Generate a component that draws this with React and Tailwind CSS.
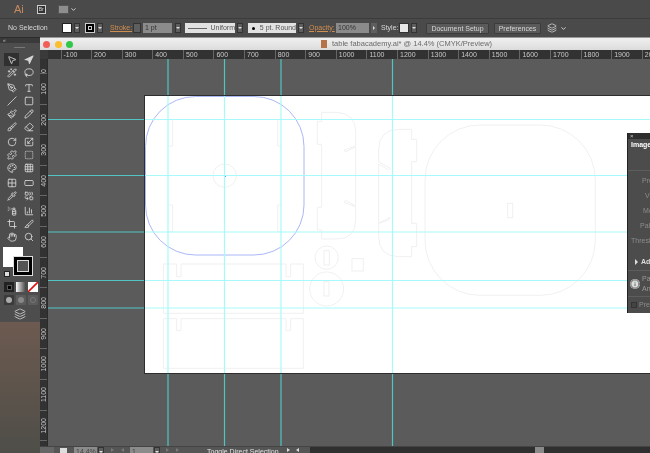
import React from 'react';
import {
  MousePointer2, Navigation, Wand2, Lasso, PenTool, Type, Slash, Square, Paintbrush, Pencil,
  Brush, Eraser, RotateCw, Scaling, Puzzle, BoxSelect, Palette, Grid3x3, Grid2x2, RectangleHorizontal,
  Pipette, Combine, SprayCan, BarChart3, Crop, Slice, Hand, Search, ChevronDown, Info, Layers,
} from 'lucide-react';

const TOOL_GROUPS = [
  [[MousePointer2, Navigation], [Wand2, Lasso]],
  [[PenTool, Type], [Slash, Square], [Paintbrush, Pencil], [Brush, Eraser]],
  [[RotateCw, Scaling], [Puzzle, BoxSelect], [Palette, Grid3x3]],
  [[Grid2x2, RectangleHorizontal], [Pipette, Combine]],
  [[SprayCan, BarChart3], [Crop, Slice], [Hand, Search]],
];

const TOP_RULER = ['-100', '200', '300', '400', '500', '600', '700', '800', '900', '1000', '1100', '1200', '1300', '1400', '1500', '1600', '1700', '1800', '1900', '2000'];
const SIDE_RULER = ['100', '200', '300', '400', '500', '600', '700', '800', '900', '1000', '1100', '1200'];

function Caret({ className = 'ml-[2px]' }) {
  return (
    <div className={`w-[6px] h-[10px] bg-[#5e5e5e] border border-[#333] flex items-center justify-center ${className}`}>
      <div className="w-0 h-0 border-x-[2px] border-x-transparent border-t-[2px] border-t-[#ddd]" />
    </div>
  );
}

function NavArrow({ className }) {
  return <div className={`w-0 h-0 mt-[1px] border-y-[2px] border-y-transparent border-l-[3px] border-l-[#777] ${className}`} />;
}

function ToolRow({ left: Left, right: Right, active }) {
  return (
    <div className="h-[13px] flex items-center">
      <div className={`w-[15px] h-[13px] ml-[4px] flex items-center justify-center ${active ? 'bg-[#303030]' : ''}`}>
        <Left size={10} strokeWidth={2} className="text-[#d8d8d8]" />
      </div>
      <div className="w-[15px] h-[13px] ml-[2px] flex items-center justify-center">
        <Right size={10} strokeWidth={2} className="text-[#d8d8d8]" fill={active ? '#d8d8d8' : 'none'} />
      </div>
    </div>
  );
}

function Toolbar() {
  return (
    <div className="h-[285px] bg-[#4d4d4d] flex flex-col border-t border-[#2c2c2c]">
      <div className="h-[5px] bg-[#3a3a3a] text-[5px] leading-[5px] text-[#bbb] pl-[3px]">«</div>
      <div className="h-[1px] w-[11px] bg-[#777] ml-[14px] mt-[4px] mb-[5px]" />
      {TOOL_GROUPS.map((group, i) => (
        <div key={i} className="mb-[2px]">
          {group.map(([left, right], j) => (
            <ToolRow key={j} left={left} right={right} active={i === 0 && j === 0} />
          ))}
        </div>
      ))}
      <div className="relative h-[32px] mt-[1px]">
        <div className="absolute left-[3px] top-[1px] w-[20px] h-[20px] bg-white" />
        <div className="absolute left-[13px] top-[10px] w-[20px] h-[20px] bg-black border border-[#ddd] flex items-center justify-center">
          <div className="w-[12px] h-[12px] border border-[#ddd] bg-[#555]" />
        </div>
        <div className="absolute left-[4px] top-[25px] w-[6px] h-[6px] bg-[#ddd] border border-[#222]" />
      </div>
      <div className="flex mt-[4px] ml-[4px] gap-[2px]">
        <div className="w-[10px] h-[10px] bg-[#222] flex items-center justify-center">
          <div className="w-[5px] h-[5px] bg-black border border-[#555]" />
        </div>
        <div className="w-[10px] h-[10px] bg-gradient-to-r from-white to-[#444]" />
        <div className="w-[10px] h-[10px] bg-white">
          <svg viewBox="0 0 10 10" className="w-full h-full">
            <line x1="0" y1="10" x2="10" y2="0" stroke="#e01010" strokeWidth="1.6" />
          </svg>
        </div>
      </div>
      <div className="flex mt-[3px] ml-[4px] gap-[2px]">
        <div className="w-[10px] h-[10px] bg-[#3a3a3a] rounded-[1px] flex items-center justify-center">
          <div className="w-[6px] h-[6px] rounded-full bg-[#aaa]" />
        </div>
        <div className="w-[10px] h-[10px] bg-[#5c5c5c] rounded-[1px] flex items-center justify-center">
          <div className="w-[6px] h-[6px] rounded-full bg-[#888]" />
        </div>
        <div className="w-[10px] h-[10px] bg-[#5c5c5c] rounded-[1px] flex items-center justify-center">
          <div className="w-[6px] h-[6px] rounded-full border border-[#777]" />
        </div>
      </div>
      <div className="flex justify-center mt-[3px]">
        <Layers size={12} className="text-[#bbb]" />
      </div>
    </div>
  );
}

function ControlBar() {
  return (
    <div className="h-[19px] bg-[#4a4a4a] flex items-center text-[7px] text-[#d8d8d8] border-t border-[#3c3c3c]">
      <span className="ml-[8px] w-[54px] text-[#d8d8d8]">No Selection</span>
      <div className="w-[10px] h-[10px] bg-white border border-[#222]" />
      <Caret />
      <div className="ml-[5px] w-[10px] h-[10px] bg-black border border-[#ccc] flex items-center justify-center">
        <div className="w-[4px] h-[4px] border border-[#ccc]" />
      </div>
      <Caret />
      <span className="ml-[7px] w-[23px] text-[#d08e50] underline">Stroke:</span>
      <div className="w-[8px] h-[10px] bg-[#5e5e5e] border border-[#333]" />
      <div className="ml-[2px] w-[29px] h-[10px] bg-[#8b8b8b] text-[#333] leading-[10px] pl-[2px]">1 pt</div>
      <Caret className="ml-[3px]" />
      <div className="ml-[4px] w-[50px] h-[10px] bg-[#e2e2e2] text-[#555] leading-[10px] flex items-center">
        <div className="ml-[3px] w-[20px] h-[1px] bg-[#666]" />
        <span className="ml-[3px]">Uniform</span>
      </div>
      <Caret />
      <div className="ml-[5px] w-[48px] h-[10px] bg-[#e2e2e2] text-[#555] leading-[10px] flex items-center">
        <div className="ml-[4px] w-[3px] h-[3px] rounded-full bg-black" />
        <span className="ml-[5px] whitespace-nowrap">5 pt. Round</span>
      </div>
      <Caret />
      <span className="ml-[5px] w-[27px] text-[#d08e50] underline">Opacity:</span>
      <div className="w-[33px] h-[10px] bg-[#8b8b8b] text-[#333] leading-[10px] pl-[2px]">100%</div>
      <div className="ml-[2px] w-[6px] h-[10px] bg-[#5e5e5e] flex items-center justify-center">
        <div className="w-0 h-0 border-y-[2px] border-y-transparent border-l-[2px] border-l-[#ddd]" />
      </div>
      <span className="ml-[4px] w-[18px]">Style:</span>
      <div className="w-[10px] h-[10px] bg-[#e8e8e8] border border-[#333]" />
      <Caret />
      <div className="ml-[9px] w-[63px] h-[11px] bg-[#5a5a5a] border border-[#3c3c3c] rounded-[1px] text-center leading-[9px]">Document Setup</div>
      <div className="ml-[5px] w-[47px] h-[11px] bg-[#5a5a5a] border border-[#3c3c3c] rounded-[1px] text-center leading-[9px]">Preferences</div>
      <Layers size={10} className="ml-[6px] text-[#ccc]" />
      <ChevronDown size={7} strokeWidth={3} className="ml-[3px] text-[#ddd]" />
    </div>
  );
}

function DocTitle() {
  return (
    <div className="h-[13px] bg-gradient-to-b from-[#f0f0f0] to-[#dcdcdc] flex items-center border-t border-[#999]">
      <div className="ml-[3px] w-[7px] h-[7px] rounded-full bg-[#f25f58]" />
      <div className="ml-[5px] w-[7px] h-[7px] rounded-full bg-[#fbbe2e]" />
      <div className="ml-[4px] w-[7px] h-[7px] rounded-full bg-[#31c748]" />
      <div className="ml-[248px] w-[6px] h-[8px] bg-[#b5734a]" />
      <span className="ml-[5px] text-[7.5px] text-[#6a6a6a] whitespace-nowrap">
        table fabacademy.ai* @ 14.4% (CMYK/Preview)
      </span>
    </div>
  );
}

function TopRuler() {
  return (
    <div className="h-[9px] bg-[#323232] flex overflow-hidden text-[7px] leading-[9px] text-[#c8c8c8]">
      <div className="w-[8px] shrink-0 bg-[#3a3a3a]" />
      <div className="w-[13.5px] shrink-0 border-r border-[#666]" />
      {TOP_RULER.map((label) => (
        <div key={label} className="w-[30.6px] shrink-0 border-r border-[#666] pl-[2px]">{label}</div>
      ))}
    </div>
  );
}

function SideRuler() {
  return (
    <div className="w-[8px] shrink-0 bg-[#323232] flex flex-col overflow-hidden text-[#c8c8c8] border-r border-[#2a2a2a]">
      <div className="h-[15px] shrink-0 border-b border-[#666] flex items-end justify-center">
        <span className="text-[7px] leading-[8px] whitespace-nowrap [writing-mode:vertical-rl] rotate-180">0</span>
      </div>
      {SIDE_RULER.map((label) => (
        <div key={label} className="h-[30.6px] shrink-0 border-b border-[#666] flex items-center justify-center">
          <span className="text-[7px] leading-[8px] whitespace-nowrap [writing-mode:vertical-rl] rotate-180">{label}</span>
        </div>
      ))}
    </div>
  );
}

function Artwork() {
  const vGuides = [168, 224.5, 281, 392.5];
  const hGuides = [119.5, 175.5, 232, 280.5, 308];
  return (
    <svg viewBox="48 59 602 387" className="absolute inset-0 w-full h-full">
      {/* guides on the grey pasteboard */}
      {vGuides.map((x) => <line key={x} x1={x} y1="59" x2={x} y2="446" stroke="#52c4c4" strokeWidth="1.2" />)}
      {hGuides.map((y) => <line key={y} x1="48" y1={y} x2="145" y2={y} stroke="#52c4c4" strokeWidth="1.2" />)}
      <rect x="144.5" y="95.5" width="506" height="278" fill="#fff" stroke="#2e2e2e" />

      {/* faded cut parts, coordinates taken from the 3x crop */}
      <g transform="translate(140 90) scale(0.3333)" fill="none" stroke="#f0f0f0" strokeWidth="3">
        <path d="M85 88H98V168H85M425 88H413V168H425M85 345H98V425H85M425 345H413V425H425" />
        <circle cx="254" cy="257" r="35" />
        <path d="M545 67H590Q647 70 647 125V168L613 180L616 186L647 170V348L616 331L613 338L647 350V390Q647 447 590 447H545V420H532V352H545V163H532V95H545Z" />
        <path d="M775 118H815V148H830V215H815V400H830V470H815V500H775Q716 498 716 440V400L750 382L746 390L716 400V222L746 240L750 235L716 215V180Q716 120 775 118Z" />
        <circle cx="560" cy="503" r="35" />
        <rect x="552" y="482" width="16" height="43" />
        <circle cx="560" cy="597" r="51" />
        <rect x="552" y="575" width="15" height="43" />
        <rect x="636" y="506" width="34" height="37" />
        <path d="M70 522H110V560H123V522H438V560H452V522H490V670H70Z" />
        <path d="M70 686H110V722H123V686H438V722H452V686H490V835H70Z" />
      </g>
      <g transform="translate(410 110) scale(0.3333)" fill="none" stroke="#f0f0f0" strokeWidth="3">
        <rect x="45" y="45" width="511" height="511" rx="165" />
        <rect x="293" y="280" width="15" height="43" />
      </g>

      {/* selected outline */}
      <rect x="145.5" y="96.5" width="158.5" height="158.5" rx="50" fill="none" stroke="#aab8f6" />
      <rect x="224" y="175" width="2" height="2" fill="#6f8cf0" />

      {/* guides over the artboard */}
      {vGuides.map((x) => <line key={x} x1={x} y1="96" x2={x} y2="373" stroke="#a8fafa" strokeWidth="1.2" />)}
      {hGuides.map((y) => <line key={y} x1="145" y1={y} x2="650" y2={y} stroke="#a8fafa" strokeWidth="1.2" />)}
    </svg>
  );
}

function ImagePanel() {
  const rows = [
    ['Preset:', 'pl-[14px] mt-[5px]'],
    ['View:', 'pl-[17px] mt-[5px]'],
    ['Mode:', 'pl-[15px] mt-[5px]'],
    ['Palette:', 'pl-[12px] mt-[5px]'],
    ['Threshold:', 'pl-[3px] mt-[5px]'],
  ];
  return (
    <div className="absolute left-[579px] top-[74px] w-[23px] h-[180px] bg-[#4c4c4c] overflow-hidden text-[7px] leading-[10px] whitespace-nowrap border-l border-[#222]">
      <div className="h-[6px] bg-[#2e2e2e] text-[6px] leading-[6px] text-[#ccc] pl-[2px]">×</div>
      <div className="pl-[3px] mt-[1px] font-bold text-white">Image Trace</div>
      <div className="h-[1px] bg-[#5e5e5e] mt-[20px]" />
      {rows.map(([label, cls]) => (
        <div key={label} className={`text-[#8c8c8c] ${cls}`}>{label}</div>
      ))}
      <div className="flex items-center mt-[11px] pl-[7px]">
        <div className="w-0 h-0 border-y-[3px] border-y-transparent border-l-[3px] border-l-[#ddd]" />
        <span className="ml-[3px] font-bold text-[#ddd]">Advanced</span>
      </div>
      <div className="h-[1px] bg-[#5e5e5e] mt-[3px]" />
      <div className="flex items-center mt-[3px] pl-[2px]">
        <Info size={10} className="shrink-0 text-[#4c4c4c] bg-[#ddd] rounded-full" />
        <div className="ml-[2px] text-[#999]">
          <div>Paths:</div>
          <div>Anchors:</div>
        </div>
      </div>
      <div className="h-[1px] bg-[#5e5e5e] mt-[2px]" />
      <div className="flex items-center mt-[3px] pl-[3px]">
        <div className="w-[6px] h-[6px] shrink-0 bg-[#444] border border-[#333]" />
        <span className="ml-[2px] text-[#8c8c8c]">Preview</span>
      </div>
    </div>
  );
}

function StatusBar() {
  return (
    <div className="h-[7px] bg-[#2f2f2f] flex overflow-hidden text-[7px] leading-[10px] border-t border-[#444]">
      <div className="w-[270px] shrink-0 bg-[#555] flex items-start text-[#444]">
        <div className="w-[14px] h-[6px] bg-[#666]" />
        <div className="ml-[6px] w-[7px] h-[5px] mt-[1px] bg-[#ddd]" />
        <div className="ml-[7px] w-[23px] h-[7px] bg-[#8b8b8b] pl-[2px]">14.4%</div>
        <Caret className="ml-[1px]" />
        <NavArrow className="ml-[7px]" />
        <NavArrow className="ml-[7px] rotate-180" />
        <div className="ml-[6px] w-[23px] h-[7px] bg-[#8b8b8b] pl-[2px]">1</div>
        <Caret className="ml-[1px]" />
        <NavArrow className="ml-[6px]" />
        <NavArrow className="ml-[7px]" />
        <span className="ml-[28px] w-[80px] text-[#e0e0e0] whitespace-nowrap">Toggle Direct Selection</span>
        <NavArrow className="border-l-[#ddd]" />
        <NavArrow className="ml-[6px] rotate-180 border-l-[#ddd]" />
      </div>
      <div className="w-[225px] shrink-0" />
      <div className="w-[9px] h-[7px] shrink-0 bg-[#8a8a8a]" />
    </div>
  );
}

export default function App() {
  return (
    <div className="w-[650px] h-[453px] overflow-hidden flex flex-col bg-[#4a4a4a] blur-[0.3px] font-['Liberation_Sans',sans-serif]">
      {/* application bar */}
      <div className="h-[18px] shrink-0 bg-[#4a4a4a] flex items-center">
        <span className="ml-[14px] text-[11px] text-[#c98a60]">Ai</span>
        <div className="ml-[13px] w-[9px] h-[9px] border border-[#ccc] bg-[#333] text-[5px] leading-[7px] text-center text-[#ddd]">Br</div>
        <div className="ml-[12px] w-[11px] h-[9px] bg-[#8e8e8e] border border-[#555]" />
        <ChevronDown size={7} strokeWidth={3} className="ml-[1px] text-[#ddd]" />
      </div>
      <ControlBar />
      <div className="flex-1 flex min-h-0">
        <div className="w-[40px] shrink-0 flex flex-col">
          <Toolbar />
          <div className="flex-1 bg-gradient-to-b from-[#6d5a50] to-[#4e4e48]" />
        </div>
        <div className="flex-1 flex flex-col min-w-0">
          <DocTitle />
          <TopRuler />
          <div className="flex-1 flex min-h-0">
            <SideRuler />
            <div className="flex-1 relative bg-[#5b5b5b] overflow-hidden">
              <Artwork />
              <ImagePanel />
            </div>
          </div>
          <StatusBar />
        </div>
      </div>
    </div>
  );
}
